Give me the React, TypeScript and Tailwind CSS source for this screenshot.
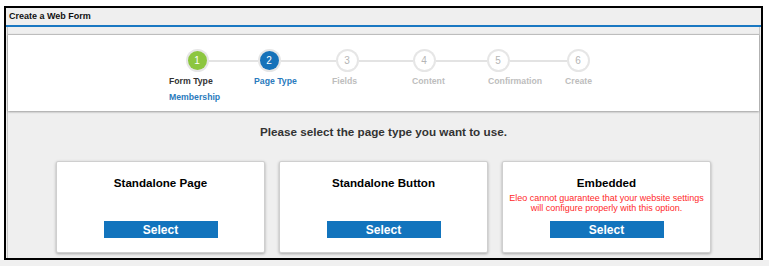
import React from "react";

const steps = [
  { n: 1, label: "Form Type", sub: "Membership", state: "done", w: "w-[72px]", ml: "ml-[8px]" },
  { n: 2, label: "Page Type", state: "active", w: "w-[72px]", ml: "ml-[21px]" },
  { n: 3, label: "Fields", state: "todo", w: "w-[84px]", ml: "ml-[27px]" },
  { n: 4, label: "Content", state: "todo", w: "w-[70px]", ml: "ml-[23px]" },
  { n: 5, label: "Confirmation", state: "todo", w: "w-[78px]", ml: "ml-[29px]" },
  { n: 6, label: "Create", state: "todo", w: "w-[82px]", ml: "ml-[28px]" },
];

const cards = [
  { title: "Standalone Page" },
  { title: "Standalone Button" },
  {
    title: "Embedded",
    note: ["Eleo cannot guarantee that your website settings", "will configure properly with this option."],
  },
];

function Step({ step, first, last }: { step: (typeof steps)[number]; first: boolean; last: boolean }) {
  const circle =
    step.state === "done"
      ? "bg-[#8cc63f] text-white"
      : step.state === "active"
        ? "bg-[#1672b9] text-white"
        : "bg-white text-[#b5b5b5]";
  const label =
    step.state === "done" ? "text-[#333]" : step.state === "active" ? "text-[#2a7bbd]" : "text-[#bdbdbd]";

  return (
    <div className={`${step.w} flex flex-col`}>
      <div className="flex items-center w-full">
        <div className={`flex-1 h-[2px] ${first ? "bg-transparent" : "bg-[#e3e3e3]"}`} />
        <div className="w-[23px] h-[23px] rounded-full bg-[#e6e6e6] flex items-center justify-center">
          <div className={`w-[19px] h-[19px] rounded-full flex items-center justify-center text-[10px] leading-none ${circle}`}>
            {step.n}
          </div>
        </div>
        <div className={`flex-1 h-[2px] ${last ? "bg-transparent" : "bg-[#e3e3e3]"}`} />
      </div>
      <div className={`${step.ml} mt-[3px] text-[8.7px] leading-[12px] font-bold whitespace-nowrap ${label}`}>{step.label}</div>
      {step.sub && (
        <div className={`${step.ml} mt-[4px] text-[8.7px] leading-[12px] font-bold text-[#2a7bbd] whitespace-nowrap`}>{step.sub}</div>
      )}
    </div>
  );
}

export default function App() {
  return (
    <div className="w-[769px] h-[266px] bg-white flex flex-col" style={{ fontFamily: '"Liberation Sans", Arial, sans-serif' }}>
      <div className="pt-[6px] pl-[4px]">
        <div className="w-[759px] h-[254px] border-2 border-black bg-[#efefef] flex flex-col">
          <div className="h-[19px] border-b-2 border-[#1a78c2] flex items-center pl-[3px] text-[9px] font-bold text-[#111]">
            Create a Web Form
          </div>
          <div className="flex-1 flex flex-col border-r border-[#c8c8c8] mr-[1px] ml-[1px] border-l">
            <div className="h-[7px]" />
            <div className="h-[77px] bg-white border-t border-[#bdbdbd] shadow-[0_1px_2px_rgba(0,0,0,0.35)] flex pl-[153px] pt-[14px]">
              {steps.map((s, i) => (
                <Step key={s.n} step={s} first={i === 0} last={i === steps.length - 1} />
              ))}
            </div>
            <div className="pt-[13px] text-center text-[11.7px] leading-[16px] font-bold text-[#333]">
              Please select the page type you want to use.
            </div>
            <div className="mt-[21px] flex justify-center gap-[14px]">
              {cards.map((c) => (
                <div
                  key={c.title}
                  className="w-[209px] h-[92px] bg-white border border-[#cfcfcf] rounded-[2px] shadow-[0_1px_3px_rgba(0,0,0,0.3)] flex flex-col items-center pt-[13px]"
                >
                  <div className="text-[11.6px] leading-[16px] font-bold text-black">{c.title}</div>
                  <div className="h-[21px] mt-[2px] flex flex-col items-center text-[9px] leading-[10px] text-[#ff2a2a]">
                    {c.note?.map((l) => (
                      <div key={l} className="whitespace-nowrap">
                        {l}
                      </div>
                    ))}
                  </div>
                  <div className="mt-[7px] w-[114px] h-[17px] bg-[#1274bd] flex items-center justify-center text-[12px] font-bold text-white">
                    Select
                  </div>
                </div>
              ))}
            </div>
          </div>
        </div>
      </div>
      <div className="flex-1 bg-[#f0f0f0]" />
    </div>
  );
}
